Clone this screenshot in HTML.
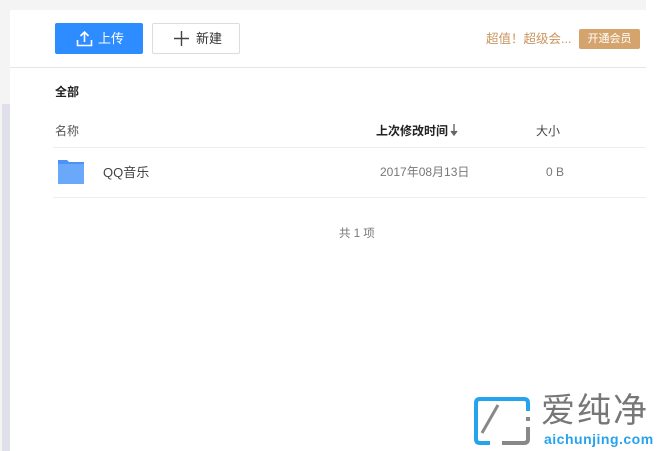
<!DOCTYPE html>
<html><head><meta charset="utf-8"><style>
*{margin:0;padding:0;box-sizing:border-box}
body{width:667px;height:451px;background:#fff;position:relative;overflow:hidden;font-family:"Liberation Sans","Noto Sans CJK SC",sans-serif;font-size:12px;color:#333}
.a{position:absolute}
</style></head><body>
<div class="a" style="left:0;top:0;width:646px;height:10px;background:#f4f4f5"></div>
<div class="a" style="left:0;top:0;width:10px;height:451px;background:#f4f4f5"></div>
<div class="a" style="left:2px;top:104px;width:8px;height:347px;background:#dfe0ea"></div>
<div class="a" style="left:10px;top:67px;width:636px;height:1px;background:#e6e6e6"></div>
<div class="a" style="left:55px;top:23px;width:88px;height:31px;background:#2d8cff;border-radius:2px;color:#fff;font-size:13px;line-height:31px;padding-left:43px">上传</div>
<svg class="a" style="left:76px;top:30px" width="17" height="17" viewBox="0 0 17 17"><path d="M8.5 12V2M4.5 6l4-4 4 4M1.5 10v5.5h14V10" fill="none" stroke="#fff" stroke-width="1.6"/></svg>
<div class="a" style="left:152px;top:23px;width:88px;height:31px;border:1px solid #dcdcdc;border-radius:2px;font-size:13px;line-height:29px;padding-left:43px;color:#333">新建</div>
<svg class="a" style="left:174px;top:31px" width="15" height="15"><path d="M7.5 0v15M0 7.5h15" stroke="#444" stroke-width="1.4"/></svg>
<div class="a" style="left:486px;top:31px;color:#c9955e;font-size:12.5px;line-height:16px">超值！超级会...</div>
<div class="a" style="left:579px;top:29px;width:61px;height:20px;background:#d4a46c;border-radius:2px;color:#fff;font-size:11px;line-height:20px;text-align:center">开通会员</div>
<div class="a" style="left:55px;top:83px;font-weight:bold;font-size:12px;color:#222">全部</div>
<div class="a" style="left:55px;top:122px;color:#555">名称</div>
<div class="a" style="left:376px;top:122px;font-weight:bold;color:#222">上次修改时间</div>
<svg class="a" style="left:450px;top:124px" width="8" height="12"><path d="M4 0v10M1 7l3 4 3-4" fill="#666" stroke="#666" stroke-width="1.4"/></svg>
<div class="a" style="left:536px;top:122px;color:#444">大小</div>
<div class="a" style="left:53px;top:147px;width:593px;height:1px;background:#eee"></div>
<div class="a" style="left:53px;top:197px;width:593px;height:1px;background:#eee"></div>
<svg class="a" style="left:58px;top:160px" width="26" height="24"><path d="M0 0h9l2 2h15v22H0z" fill="#4c93f5"/><rect x="0" y="4" width="26" height="20" fill="#6aa8fa"/></svg>
<div class="a" style="left:103px;top:165px;font-size:13px;color:#444;line-height:16px">QQ音乐</div>
<div class="a" style="left:380px;top:165px;color:#777;line-height:14px">2017年08月13日</div>
<div class="a" style="left:546px;top:165px;color:#777;line-height:14px">0 B</div>
<div class="a" style="left:339px;top:225px;color:#777;font-size:11.5px">共 1 项</div>
<svg class="a" style="left:474px;top:397px" width="58" height="48"><path d="M16 2H6Q2 2 2 6v36q0 4 4 4h10" fill="none" stroke="#26a3ee" stroke-width="4"/><path d="M16 2h34q4 0 4 4v8" fill="none" stroke="#26a3ee" stroke-width="4"/><path d="M54 30v12q0 4-4 4H28" fill="none" stroke="#888" stroke-width="4"/><path d="M24 8L8 36" stroke="#888" stroke-width="3"/><rect x="52" y="20" width="4" height="4" fill="#888"/></svg>
<div class="a" style="left:541px;top:391px;font-size:34px;color:#777;letter-spacing:2px;line-height:40px">爱纯净</div>
<div class="a" style="left:544px;top:431px;font-size:14px;color:#26a3ee;font-weight:bold;letter-spacing:0.5px;line-height:16px">aichunjing.com</div>
</body></html>
